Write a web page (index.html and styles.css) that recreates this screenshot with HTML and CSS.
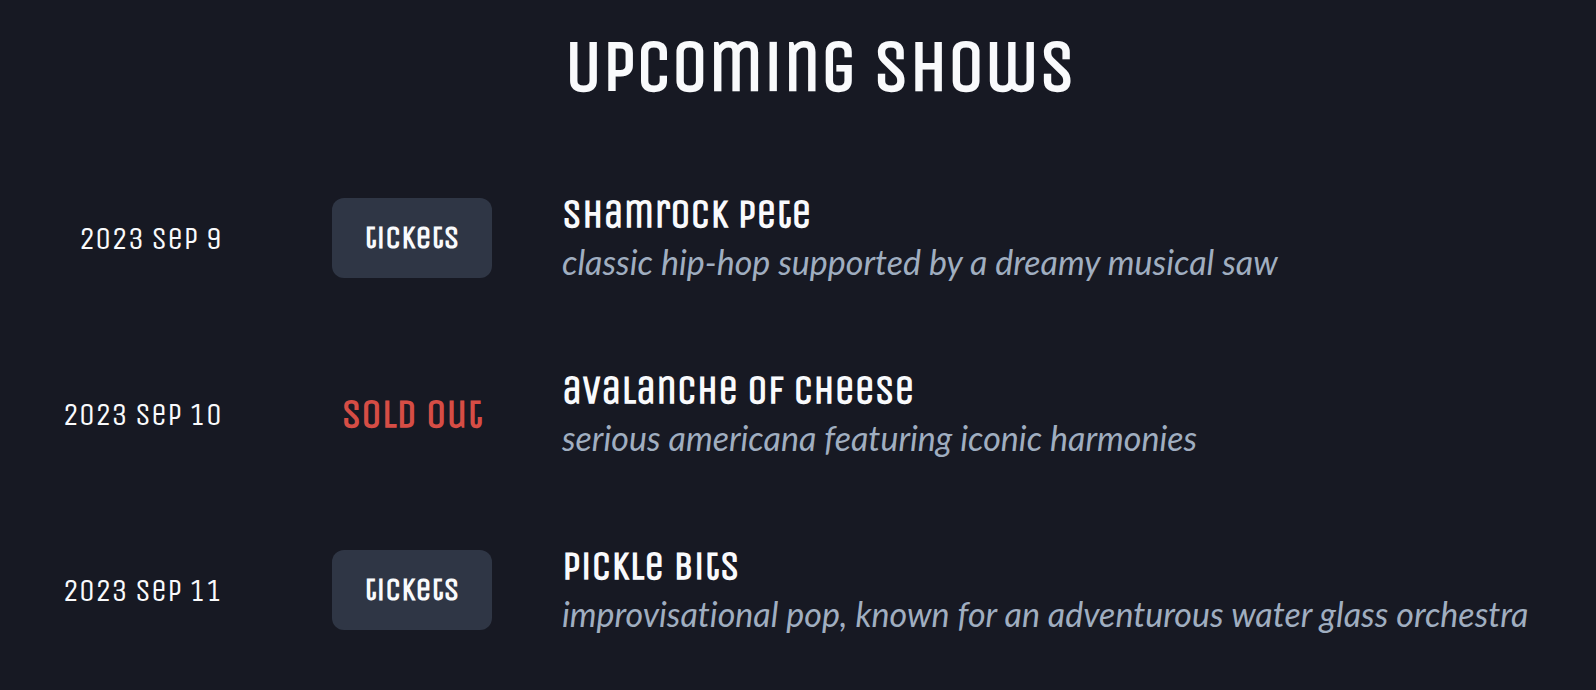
FILE: index.html
```html
<!DOCTYPE html>
<html lang="en">
<head>
<meta charset="utf-8">
<meta name="viewport" content="width=device-width, initial-scale=1">
<title>Upcoming Shows</title>
<link rel="stylesheet" href="styles.css">
</head>
<body>
<main class="page">
  <h1 class="page-title">Upcoming Shows</h1>
  <ul class="shows">
    <li class="show">
      <time class="show-date" datetime="2023-09-09">2023 Sep 9</time>
      <div class="show-action"><button class="tickets" type="button">tickets</button></div>
      <div class="show-info">
        <h2 class="band">shamrock pete</h2>
        <p class="description">classic hip-hop supported by a dreamy musical saw</p>
      </div>
    </li>
    <li class="show">
      <time class="show-date" datetime="2023-09-10">2023 Sep 10</time>
      <div class="show-action"><span class="sold-out">sold out</span></div>
      <div class="show-info">
        <h2 class="band">avalanche of cheese</h2>
        <p class="description">serious americana featuring iconic harmonies</p>
      </div>
    </li>
    <li class="show">
      <time class="show-date" datetime="2023-09-11">2023 Sep 11</time>
      <div class="show-action"><button class="tickets" type="button">tickets</button></div>
      <div class="show-info">
        <h2 class="band">pickle bits</h2>
        <p class="description">improvisational pop, known for an adventurous water glass orchestra</p>
      </div>
    </li>
  </ul>
</main>
</body>
</html>
```
FILE: styles.css
```css
:root {
  --display: "Unica One", "Liberation Sans Narrow", "Roboto Condensed", Roboto, sans-serif;
}

* {
  box-sizing: border-box;
}

body {
  margin: 0;
  background: #171923;
  color: #f9fafc;
  font-family: Lato, sans-serif;
}

.page {
  padding: 24px 0 48px 44px;
}

.page-title {
  margin: 0 0 80px;
  font-family: var(--display);
  font-size: 72px;
  font-weight: 700;
  line-height: 86px;
  text-align: center;
}

.shows {
  display: grid;
  gap: 80px;
  margin: 0;
  padding: 0;
  list-style: none;
}

.show {
  display: grid;
  grid-template-columns: 178px 340px 1fr;
  align-items: center;
}

.show-date {
  font-family: var(--display);
  font-size: 32px;
  font-weight: 400;
  text-align: right;
  white-space: nowrap;
}

.show-action {
  display: flex;
  justify-content: center;
  padding: 0 70px 0 110px;
}

.tickets {
  padding: 20px 32px;
  border: 0;
  border-radius: 12px;
  background: #2f3645;
  color: inherit;
  font-family: var(--display);
  font-size: 32px;
  font-weight: 700;
  line-height: 40px;
  cursor: pointer;
}

.sold-out {
  color: #d64d45;
  font-family: var(--display);
  font-size: 40px;
  font-weight: 700;
  white-space: nowrap;
}

.band {
  margin: 0;
  font-family: var(--display);
  font-size: 40px;
  font-weight: 700;
  line-height: 48px;
}

.description {
  margin: 0;
  color: #a0aec0;
  font-size: 34px;
  font-style: italic;
  font-variant-ligatures: none;
  line-height: 48px;
}
```
